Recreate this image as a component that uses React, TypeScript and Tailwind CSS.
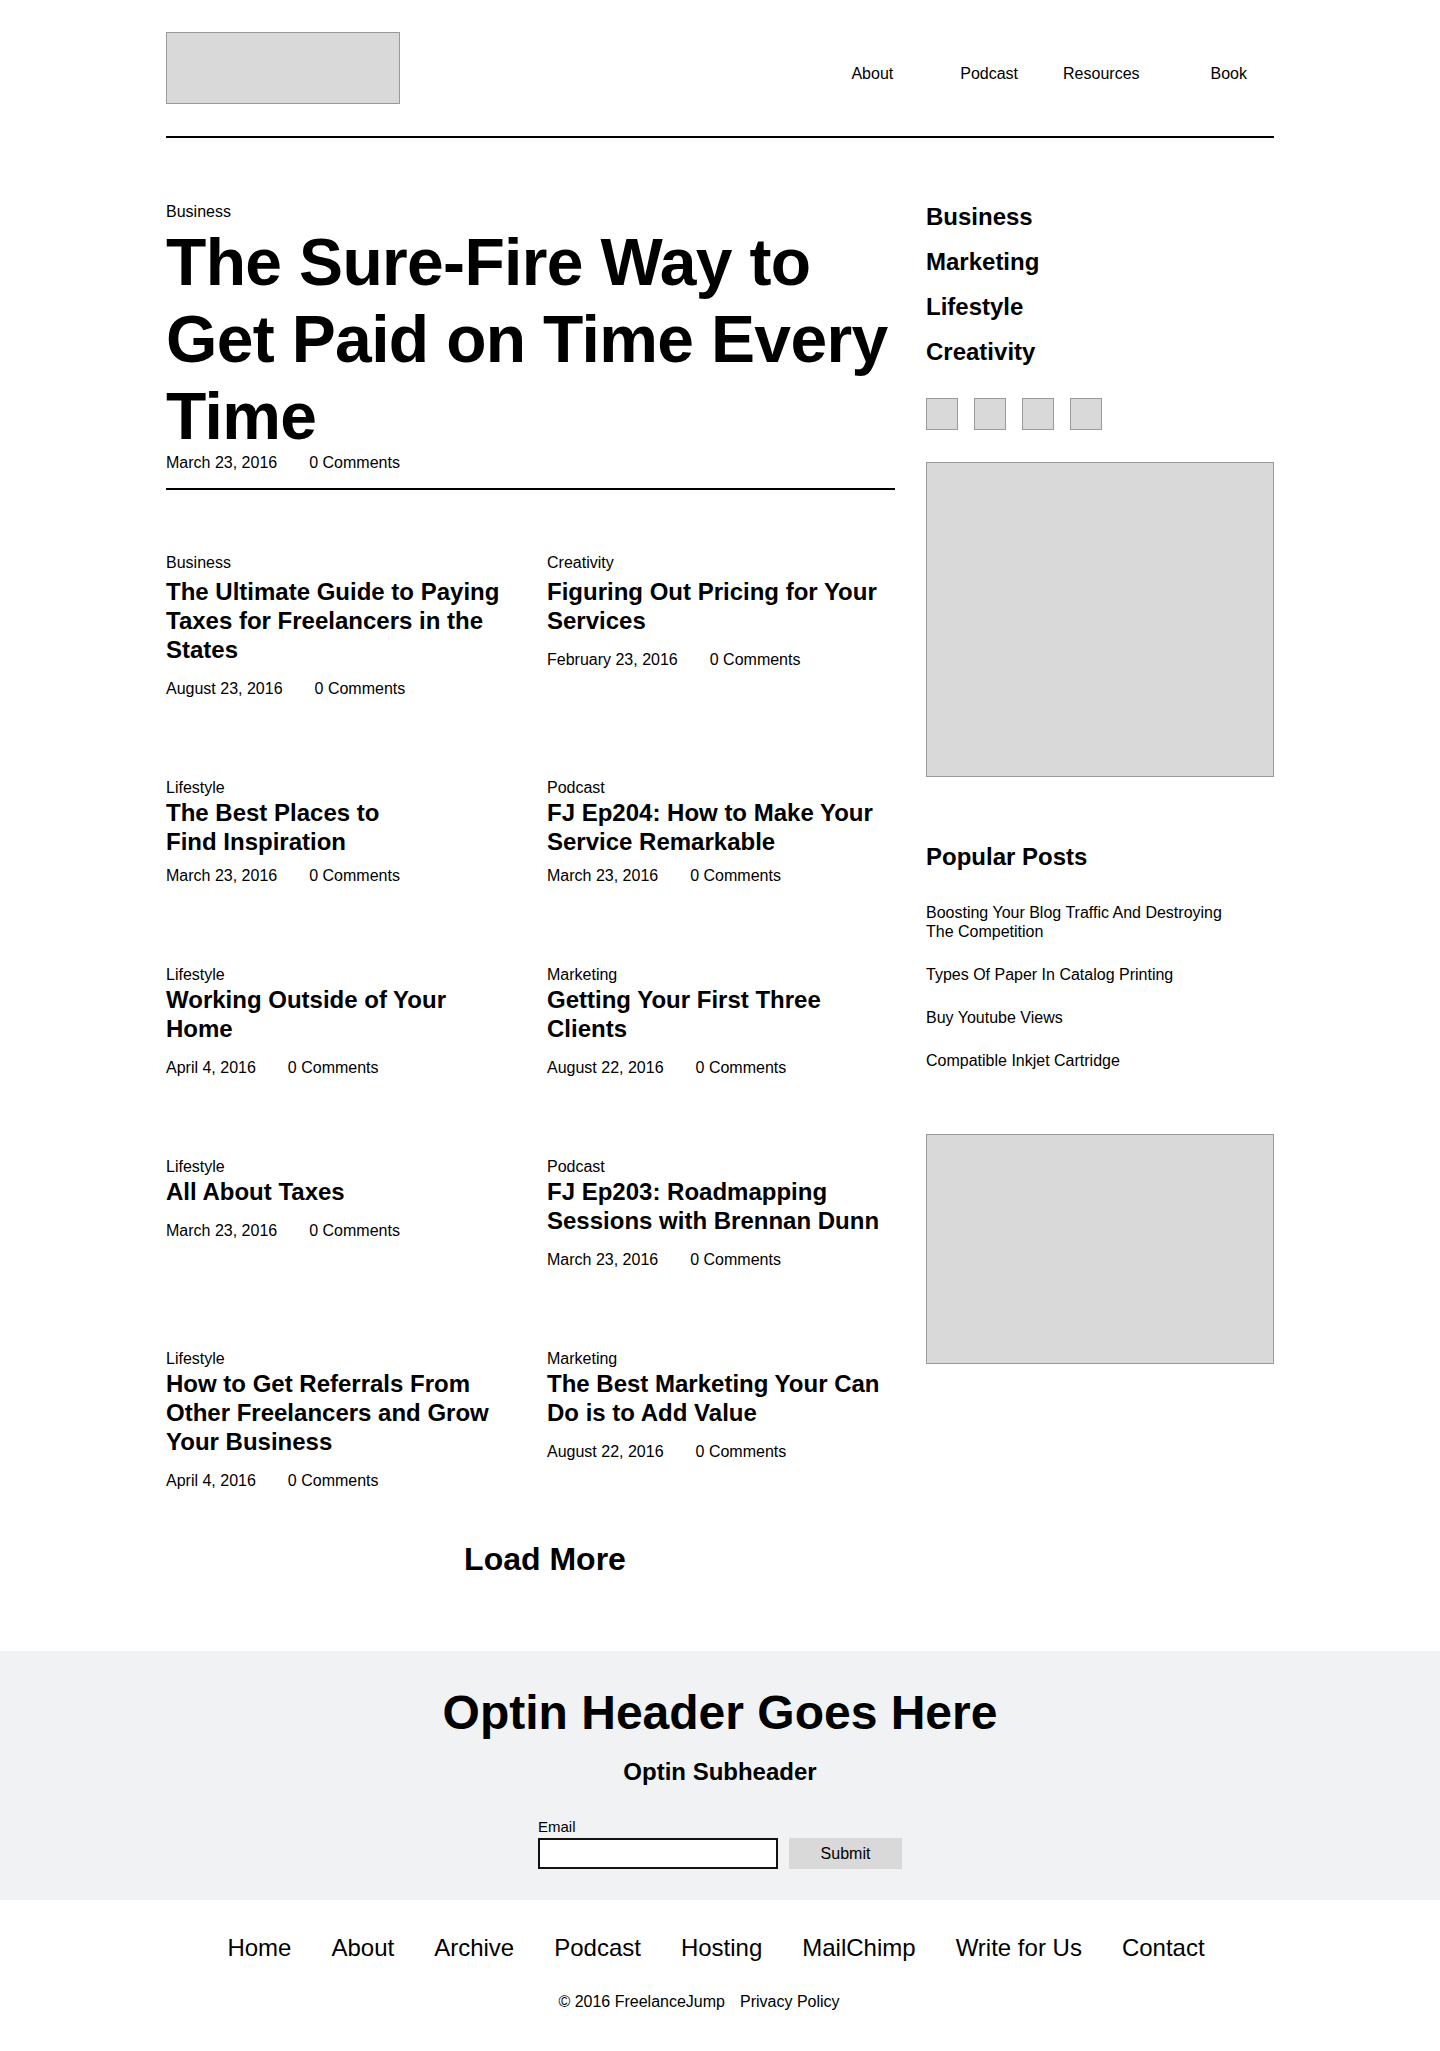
import React from 'react';

interface Post {
  category: string;
  lines: string[];
  date: string;
  titleGap?: string;
  metaGap?: string;
}

const posts: Post[] = [
  { category: 'Business', lines: ['The Ultimate Guide to Paying', 'Taxes for Freelancers in the', 'States'], date: 'August 23, 2016', titleGap: 'mt-[5px]' },
  { category: 'Creativity', lines: ['Figuring Out Pricing for Your', 'Services'], date: 'February 23, 2016', titleGap: 'mt-[5px]' },
  { category: 'Lifestyle', lines: ['The Best Places to', 'Find Inspiration'], date: 'March 23, 2016', metaGap: 'mt-[10px]' },
  { category: 'Podcast', lines: ['FJ Ep204: How to Make Your', 'Service Remarkable'], date: 'March 23, 2016', metaGap: 'mt-[10px]' },
  { category: 'Lifestyle', lines: ['Working Outside of Your', 'Home'], date: 'April 4, 2016' },
  { category: 'Marketing', lines: ['Getting Your First Three', 'Clients'], date: 'August 22, 2016' },
  { category: 'Lifestyle', lines: ['All About Taxes'], date: 'March 23, 2016' },
  { category: 'Podcast', lines: ['FJ Ep203: Roadmapping', 'Sessions with Brennan Dunn'], date: 'March 23, 2016' },
  { category: 'Lifestyle', lines: ['How to Get Referrals From', 'Other Freelancers and Grow', 'Your Business'], date: 'April 4, 2016' },
  { category: 'Marketing', lines: ['The Best Marketing Your Can', 'Do is to Add Value'], date: 'August 22, 2016' },
];

const popular = [
  ['Boosting Your Blog Traffic And Destroying', 'The Competition'],
  ['Types Of Paper In Catalog Printing'],
  ['Buy Youtube Views'],
  ['Compatible Inkjet Cartridge'],
];

const footerLinks = ['Home', 'About', 'Archive', 'Podcast', 'Hosting', 'MailChimp', 'Write for Us', 'Contact'];

function Meta({ date, className = '' }: { date: string; className?: string }) {
  return (
    <div className={`flex gap-8 text-[16px] leading-[20px] ${className}`}>
      <span>{date}</span>
      <span>0 Comments</span>
    </div>
  );
}

function PostCard({ post }: { post: Post }) {
  return (
    <article>
      <div className="text-[16px] leading-[18px]">{post.category}</div>
      <h2 className={`${post.titleGap || 'mt-[1px]'} text-[24px] font-bold leading-[29px]`}>
        {post.lines.map((line, i) => (
          <React.Fragment key={i}>
            {i > 0 && <br />}
            {line}
          </React.Fragment>
        ))}
      </h2>
      <Meta date={post.date} className={post.metaGap || 'mt-[15px]'} />
    </article>
  );
}

export default function App() {
  return (
    <div className="min-h-screen bg-white font-['Liberation_Sans',Arial,sans-serif] text-black">
      <div className="mx-auto w-[1108px]">
        {/* Header */}
        <header className="flex items-start border-b-2 border-black pt-[32px] pb-[32px]">
          <div className="h-[72px] w-[234px] border border-[#9a9a9a] bg-[#d9d9d9]" />
          <nav className="ml-auto flex pt-[32px] pr-[27px] text-[16px] leading-[20px]">
            <a href="#">About</a>
            <a href="#" className="ml-[67px]">Podcast</a>
            <a href="#" className="ml-[45px]">Resources</a>
            <a href="#" className="ml-[71px]">Book</a>
          </nav>
        </header>

        <div className="flex">
          {/* Main column */}
          <main className="w-[729px] pt-[65px]">
            <div className="text-[16px] leading-[18px]">Business</div>
            <h1 className="mt-[3px] text-[66px] font-bold leading-[77px] tracking-[-0.01em]">
              The Sure-Fire Way to Get Paid on Time Every Time
            </h1>
            <div className="flex gap-8 text-[16px] leading-[16px]">
              <span>March 23, 2016</span>
              <span>0 Comments</span>
            </div>
            <div className="mt-[17px] h-[2px] bg-black" />

            <div className="mt-[64px] grid grid-cols-2 gap-x-[33px] gap-y-[80px]">
              {posts.map((post, i) => (
                <PostCard key={i} post={post} />
              ))}
            </div>

            <div className="mt-[49px] flex justify-center pl-[29px]">
              <button className="text-[32px] font-bold leading-[38px]">Load More</button>
            </div>
          </main>

          {/* Sidebar */}
          <aside className="ml-auto w-[348px] pt-[64px]">
            <ul className="flex flex-col gap-[16px] text-[24px] font-bold leading-[29px]">
              <li>Business</li>
              <li>Marketing</li>
              <li>Lifestyle</li>
              <li>Creativity</li>
            </ul>
            <div className="mt-[32px] flex gap-[16px]">
              {[0, 1, 2, 3].map((i) => (
                <div key={i} className="h-[32px] w-[32px] border border-[#9a9a9a] bg-[#d9d9d9]" />
              ))}
            </div>
            <div className="mt-[32px] h-[315px] border border-[#9a9a9a] bg-[#d9d9d9]" />

            <h3 className="mt-[65px] text-[24px] font-bold leading-[29px]">Popular Posts</h3>
            <ul className="mt-[32px] flex w-[320px] flex-col gap-6 text-[16px] leading-[19px]">
              {popular.map((item, i) => (
                <li key={i}>
                  {item.map((line, j) => (
                    <React.Fragment key={j}>
                      {j > 0 && <br />}
                      {line}
                    </React.Fragment>
                  ))}
                </li>
              ))}
            </ul>
            <div className="mt-[64px] h-[230px] border border-[#9a9a9a] bg-[#d9d9d9]" />
          </aside>
        </div>
      </div>

      {/* Optin */}
      <section className="mt-[73px] bg-[#f1f2f3] pt-[34px] pb-[31px] text-center">
        <h2 className="text-[48px] font-bold leading-[56px]">Optin Header Goes Here</h2>
        <h3 className="mt-[17px] text-[24px] font-bold leading-[28px]">Optin Subheader</h3>
        <form className="mx-auto mt-[32px] w-[364px] text-left" onSubmit={(e) => e.preventDefault()}>
          <label className="block text-[15px] leading-[18px]">Email</label>
          <div className="mt-[2px] flex gap-[11px]">
            <input type="email" className="h-[31px] w-[240px] border-2 border-[#111] bg-white px-2 outline-none" />
            <button type="submit" className="h-[31px] w-[113px] bg-[#d9d9d9] text-[16px]">
              Submit
            </button>
          </div>
        </form>
      </section>

      {/* Footer */}
      <footer className="pt-[34px] pb-[40px]">
        <nav className="flex justify-center gap-10 pr-[8px] text-[24px] leading-[28px]">
          {footerLinks.map((link) => (
            <a key={link} href="#">{link}</a>
          ))}
        </nav>
        <div className="mt-[31px] flex justify-center gap-[15px] pr-[42px] text-[16px] leading-[18px]">
          <span>© 2016 FreelanceJump</span>
          <a href="#">Privacy Policy</a>
        </div>
      </footer>
    </div>
  );
}
